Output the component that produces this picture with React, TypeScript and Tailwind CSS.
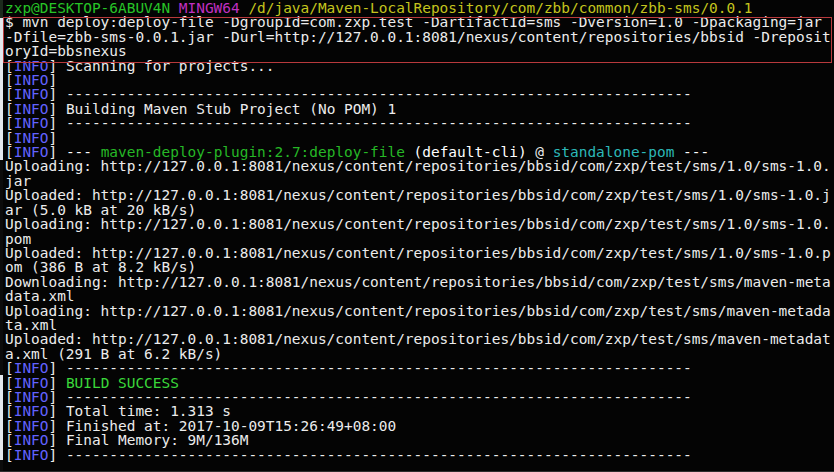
type Seg = { t: string; c?: string };

const dashes = '-'.repeat(72);
const base = 'http://127.0.0.1:8081/nexus/content/repositories/bbsid/com/zxp/test/sms/';

const info = (rest: Seg[]): Seg[] => [
  { t: '[' },
  { t: 'INFO', c: 'text-[#6262ff]' },
  { t: '] ' },
  ...rest,
];

const lines: Seg[][] = [
  [
    { t: 'zxp@DESKTOP-6ABUV4N ', c: 'text-[#27c427]' },
    { t: 'MINGW64 ', c: 'text-[#c030c0]' },
    { t: '/d/java/Maven-LocalRepository/com/zbb/common/zbb-sms/0.0.1', c: 'text-[#c4c41e]' },
  ],
  [{ t: '$ mvn deploy:deploy-file -DgroupId=com.zxp.test -DartifactId=sms -Dversion=1.0 -Dpackaging=jar' }],
  [{ t: '-Dfile=zbb-sms-0.0.1.jar -Durl=http://127.0.0.1:8081/nexus/content/repositories/bbsid -Dreposit' }],
  [{ t: 'oryId=bbsnexus' }],
  info([{ t: 'Scanning for projects...' }]),
  info([]),
  info([{ t: dashes }]),
  info([{ t: 'Building Maven Stub Project (No POM) 1' }]),
  info([{ t: dashes }]),
  info([]),
  info([
    { t: '--- ', c: 'text-white' },
    { t: 'maven-deploy-plugin:2.7:deploy-file ', c: 'text-[#26b826]' },
    { t: '(default-cli)', c: 'text-white' },
    { t: ' @ ' },
    { t: 'standalone-pom', c: 'text-[#2cb8b8]' },
    { t: ' ---', c: 'text-white' },
  ]),
  [{ t: 'Uploading: ' + base + '1.0/sms-1.0.' }],
  [{ t: 'jar' }],
  [{ t: 'Uploaded: ' + base + '1.0/sms-1.0.j' }],
  [{ t: 'ar (5.0 kB at 20 kB/s)' }],
  [{ t: 'Uploading: ' + base + '1.0/sms-1.0.' }],
  [{ t: 'pom' }],
  [{ t: 'Uploaded: ' + base + '1.0/sms-1.0.p' }],
  [{ t: 'om (386 B at 8.2 kB/s)' }],
  [{ t: 'Downloading: ' + base + 'maven-meta' }],
  [{ t: 'data.xml' }],
  [{ t: 'Uploading: ' + base + 'maven-metada' }],
  [{ t: 'ta.xml' }],
  [{ t: 'Uploaded: ' + base + 'maven-metadat' }],
  [{ t: 'a.xml (291 B at 6.2 kB/s)' }],
  info([{ t: dashes }]),
  info([{ t: 'BUILD SUCCESS', c: 'text-[#3ad83a]' }]),
  info([{ t: dashes }]),
  info([{ t: 'Total time: 1.313 s' }]),
  info([{ t: 'Finished at: 2017-10-09T15:26:49+08:00' }]),
  info([{ t: 'Final Memory: 9M/136M' }]),
  info([{ t: dashes }]),
];

function Line({ segs }: { segs: Seg[] }) {
  return (
    <div className="h-[14.42px] whitespace-pre">
      {segs.map((s, i) => (
        <span key={i} className={s.c}>
          {s.t}
        </span>
      ))}
    </div>
  );
}

export default function App() {
  return (
    <div className="flex w-[834px] h-[472px] overflow-hidden bg-[#040404] border-b border-[#2e2e2e]">
      {/* sliver of the window behind */}
      <div className="flex flex-col w-[3px] shrink-0">
        <div className="h-[18px] bg-[#1d2a1d]" />
        <div className="h-[142px] bg-[#e4e8ee]" />
        <div className="h-[215px] bg-[#0b0b0b]" />
        <div className="h-[85px] bg-[#e4e8ee]" />
        <div className="flex-1 bg-[#0b0b0b]" />
      </div>

      <div
        className="flex-1 pt-[1px] pl-[2px] text-[14.45px] leading-[14.42px] text-[#ececec]"
        style={{ fontFamily: '"DejaVu Sans Mono", "Liberation Mono", monospace' }}
      >
        <Line segs={lines[0]} />
        <div className="relative">
          {lines.slice(1, 4).map((l, i) => (
            <Line key={i} segs={l} />
          ))}
          <div className="absolute top-[2px] -bottom-[4px] -left-[2px] right-[2px] border border-[#b8393c]" />
        </div>
        {lines.slice(4).map((l, i) => (
          <Line key={i} segs={l} />
        ))}
      </div>
    </div>
  );
}
